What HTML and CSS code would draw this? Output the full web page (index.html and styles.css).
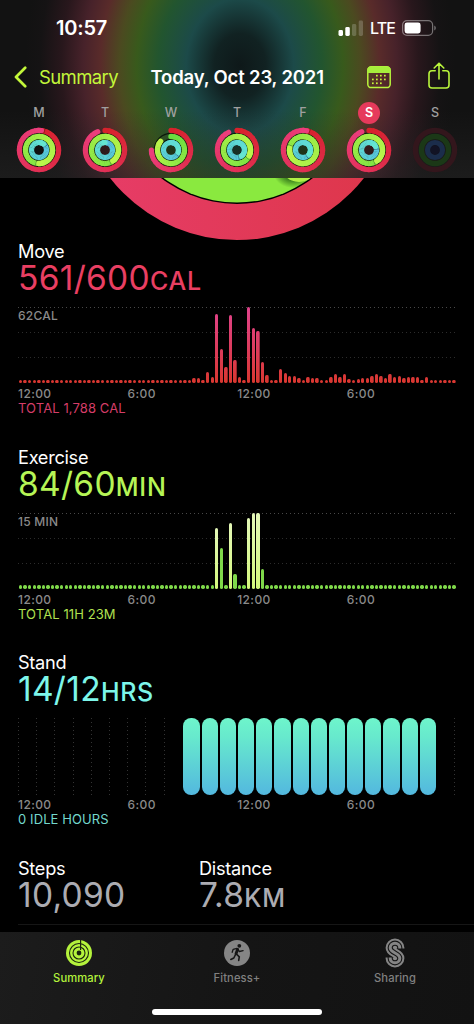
FILE: index.html
```html
<!DOCTYPE html>
<html lang="en">
<head>
  <meta charset="UTF-8">
  <meta name="viewport" content="width=device-width, initial-scale=1.0">
  <title>Activity Summary</title>
  <link rel="stylesheet" href="styles.css">
</head>
<body>
  <header class="header">
    <div class="status">
      <span class="time">10:57</span>
      <div class="status-icons">
        <svg width="26" height="16" viewBox="0 0 26 16">
          <rect x="0.5" y="10" width="4.5" height="6" rx="1.4" fill="#fff"/>
          <rect x="7.3" y="7" width="4.5" height="9" rx="1.4" fill="#fff"/>
          <rect x="14" y="4" width="4.3" height="12" rx="1.4" fill="#fff" opacity=".2"/>
          <rect x="20.7" y="0.5" width="4.3" height="15.5" rx="1.4" fill="#fff" opacity=".2"/>
        </svg>
        <span class="lte">LTE</span>
        <svg width="36" height="16" viewBox="0 0 36 16">
          <rect x="0.6" y="0.6" width="30" height="14.8" rx="4.4" fill="none" stroke="#fff" stroke-opacity=".4" stroke-width="1.2"/>
          <rect x="2.6" y="2.6" width="16" height="10.8" rx="2.4" fill="#fff"/>
          <path d="M32.4 5.5a3 3 0 0 1 0 5z" fill="#fff" opacity=".45"/>
        </svg>
      </div>
    </div>

    <nav class="nav">
      <a class="back">
        <svg width="13" height="22" viewBox="0 0 13 22"><path d="M11.2 1.8 2 11l9.2 9.2" fill="none" stroke="#c3f73a" stroke-width="2.7" stroke-linecap="round" stroke-linejoin="round"/></svg>
        <span class="back-label">Summary</span>
      </a>
      <h1 class="title">Today, Oct 23, 2021</h1>
      <svg class="calendar" width="24" height="23" viewBox="0 0 24 23">
        <rect x="0.8" y="0.8" width="22.4" height="20.8" rx="3.4" fill="none" stroke="#b9f53c" stroke-width="1.5"/>
        <path d="M.4 7V4A3.6 3.6 0 0 1 4 .4h16A3.6 3.6 0 0 1 23.6 4v3z" fill="#a6ee3c"/>
        <g fill="#c3f73a">
          <rect x="9" y="8.8" width="1.7" height="1.7"/><rect x="13" y="8.8" width="1.7" height="1.7"/><rect x="17" y="8.8" width="1.7" height="1.7"/>
          <rect x="5" y="12.6" width="1.7" height="1.7"/><rect x="9" y="12.6" width="1.7" height="1.7"/><rect x="13" y="12.6" width="1.7" height="1.7"/><rect x="17" y="12.6" width="1.7" height="1.7"/>
          <rect x="5" y="16.4" width="1.7" height="1.7"/><rect x="9" y="16.4" width="1.7" height="1.7"/><rect x="13" y="16.4" width="1.7" height="1.7"/>
        </g>
      </svg>
      <svg class="share" width="22" height="28" viewBox="0 0 22 28">
        <path d="M7.2 8.8H4a3 3 0 0 0-3 3V23a3 3 0 0 0 3 3h14a3 3 0 0 0 3-3V11.8a3 3 0 0 0-3-3h-3.200M11 17V1.400M6.200 6 11 1.200 15.800 6" fill="none" stroke="#b9f53c" stroke-width="1.600" stroke-linecap="round" stroke-linejoin="round"/>
      </svg>
    </nav>

    <div class="week" id="week"></div>
  </header>

  <main class="main">
    <svg class="big-ring" width="474" height="62" viewBox="0 178 474 62">
      <defs>
        <radialGradient id="tipShadow">
          <stop offset=".45" stop-color="#1e5a10" stop-opacity=".8"/>
          <stop offset="1" stop-color="#1e5a10" stop-opacity="0"/>
        </radialGradient>
        <linearGradient id="moveRing">
          <stop offset=".1" stop-color="#e63c66"/>
          <stop offset=".9" stop-color="#de374c"/>
        </linearGradient>
        <clipPath id="greenClip"><circle cx="237" cy="80" r="122.500"/></clipPath>
      </defs>
      <circle cx="237" cy="79" r="161" fill="url(#moveRing)"/>
      <circle cx="237" cy="80" r="124" fill="#000"/>
      <circle cx="237" cy="80" r="122.500" fill="#8ae93f"/>
      <g clip-path="url(#greenClip)">
        <ellipse cx="293" cy="172" rx="20" ry="16" fill="url(#tipShadow)"/>
        <circle cx="299" cy="163" r="19" fill="#b0f046"/>
      </g>
    </svg>

    <section class="metric move">
      <h2>Move</h2>
      <p class="value"><span class="num">561/600</span><span class="unit">CAL</span></p>
      <div class="chart lines"><span class="max">62CAL</span><div class="bars" id="moveBars"></div></div>
      <div class="axis"><span>12:00</span><span>6:00</span><span>12:00</span><span>6:00</span></div>
      <p class="total">TOTAL 1,788 CAL</p>
    </section>

    <section class="metric exercise">
      <h2>Exercise</h2>
      <p class="value"><span class="num">84/60</span><span class="unit">MIN</span></p>
      <div class="chart lines"><span class="max">15 MIN</span><div class="bars" id="exerciseBars"></div></div>
      <div class="axis"><span>12:00</span><span>6:00</span><span>12:00</span><span>6:00</span></div>
      <p class="total">TOTAL 11H 23M</p>
    </section>

    <section class="metric stand">
      <h2>Stand</h2>
      <p class="value"><span class="num">14/12</span><span class="unit">HRS</span></p>
      <div class="chart hours" id="standBars"></div>
      <div class="axis"><span>12:00</span><span>6:00</span><span>12:00</span><span>6:00</span></div>
      <p class="total">0 IDLE HOURS</p>
    </section>

    <div class="stats">
      <div class="stat steps">
        <h2>Steps</h2>
        <p class="value"><span class="num">10,090</span></p>
      </div>
      <div class="stat distance">
        <h2>Distance</h2>
        <p class="value"><span class="num">7.8</span><span class="unit">KM</span></p>
      </div>
    </div>
  </main>

  <footer class="tabbar">
    <div class="tabs">
      <a class="tab active">
        <svg width="28" height="30" viewBox="0 0 28 30">
          <circle cx="14" cy="15" r="13" fill="#b4f33c"/>
          <g fill="none" stroke="#1b2410" stroke-width="1.100">
            <circle cx="14" cy="15" r="9.500"/>
            <circle cx="14" cy="15" r="6"/>
          </g>
          <circle cx="14" cy="15" r="2.400" fill="#1b2410"/>
          <path d="M15.600 2v10" stroke="#1b2410" stroke-width="1.200"/>
        </svg>
        <span>Summary</span>
      </a>
      <a class="tab">
        <svg width="28" height="30" viewBox="0 0 28 30">
          <circle cx="14" cy="15" r="13" fill="#858585"/>
          <circle cx="16.300" cy="7.800" r="1.900" fill="#161616"/>
          <path d="M13.400 16l2.900 2.800-.6 3.600M12.300 17l-1.500 3-3 1.500" fill="none" stroke="#161616" stroke-width="1.600" stroke-linecap="round" stroke-linejoin="round"/>
          <path d="M14.600 11.400 13 15.800" stroke="#161616" stroke-width="2.900" stroke-linecap="round"/>
          <path d="M9.200 14.300l1-3 3.800-1 2.400 3.200 3.700-.8" fill="none" stroke="#161616" stroke-width="1.300" stroke-linecap="round" stroke-linejoin="round"/>
        </svg>
        <span>Fitness+</span>
      </a>
      <a class="tab">
        <svg width="28" height="30" viewBox="0 0 28 30" fill="none">
          <path d="M18.800 10.600V9.800a4.800 4.600 0 0 0-9.600 0c0 5.600 9.600 4.800 9.600 10.400a4.800 4.600 0 0 1-9.600 0v-.8" stroke="#858585" stroke-width="9.200"/>
          <path d="M18.800 11V9.800a4.800 4.600 0 0 0-9.600 0c0 5.600 9.600 4.800 9.600 10.400a4.800 4.600 0 0 1-9.600 0V19" stroke="#161616" stroke-width="5.200"/>
          <path d="M18.800 10.600V9.800a4.800 4.600 0 0 0-9.600 0c0 5.600 9.600 4.800 9.600 10.400a4.800 4.600 0 0 1-9.600 0v-.8" stroke="#858585" stroke-width="3"/>
        </svg>
        <span>Sharing</span>
      </a>
    </div>
    <div class="home"></div>
  </footer>

  <script src="script.js"></script>
</body>
</html>
```
FILE: styles.css
```css
* {
  box-sizing: border-box;
}
body {
  margin: 0;
  width: 474px;
  height: 1024px;
  overflow: hidden;
  background: #000;
  color: #fff;
  font-family: Inter, "Liberation Sans", sans-serif;
}
h1, h2, p {
  margin: 0;
  font-weight: 400;
}
svg {
  display: block;
  flex: none;
}

/* Header */
.header {
  height: 178px;
  background:
    linear-gradient(rgba(40, 40, 40, 0) 110px, rgba(40, 40, 40, .45) 178px),
    radial-gradient(ellipse 215px 270px at 240px 66px, #0e1819 0%, #112222 12%, #1c4a49 25%, #22552f 38%, #385a1c 48%, #4b4a20 56%, #592b2a 65%, #47222a 73%, #28171c 83%, #151314 93%, #121212 100%);
}
.status {
  height: 56px;
  padding: 0 36px 0 56px;
  display: flex;
  align-items: center;
  justify-content: space-between;
}
.time {
  font-size: 20px;
  font-weight: 600;
  letter-spacing: -.2px;
}
.status-icons {
  display: flex;
  align-items: center;
  gap: 6px;
}
.lte {
  width: 26px;
  font-size: 16px;
  font-weight: 500;
  letter-spacing: -.9px;
}
.nav {
  height: 42px;
  padding-left: 14px;
  display: flex;
  align-items: center;
}
.back {
  width: 136.5px;
  display: flex;
  align-items: center;
  gap: 12px;
  color: #c3f73a;
  font-size: 18.5px;
}
.back-label {
  letter-spacing: -.6px;
}
.title {
  width: 216.5px;
  font-size: 18.5px;
  font-weight: 600;
  letter-spacing: -.17px;
  white-space: nowrap;
}
.share {
  margin: -3px 0 0 37px;
}
.week {
  padding: 4px 6px 0;
  display: grid;
  grid-template-columns: repeat(7, 66px);
}
.day {
  display: flex;
  flex-direction: column;
  align-items: center;
  gap: 3px;
}
.letter {
  width: 22px;
  height: 22px;
  border-radius: 50%;
  line-height: 22px;
  text-align: center;
  font-size: 12.5px;
  font-weight: 500;
  color: #a0a0a0;
}
.today .letter {
  background: #e63a5c;
  color: #fff;
  font-weight: 600;
}

/* Metrics */
.main {
  height: 754px;
  overflow: hidden;
}
.metric {
  height: 205.67px;
  padding-left: 18px;
}
h2 {
  height: 22px;
  line-height: 22px;
  font-size: 18.2px;
  letter-spacing: -.3px;
}
.value {
  height: 34px;
  line-height: 33px;
  display: flex;
  align-items: baseline;
}
.num {
  font-size: 33.5px;
  letter-spacing: .3px;
}
.unit {
  font-size: 25px;
  font-weight: 500;
  letter-spacing: .7px;
}
.move .value { color: #e93f62; }
.exercise .value { color: #b6f556; }
.stand .value { color: #7df6ea; }
.stats .value { color: #acacb2; }

.chart {
  width: 438px;
  height: 76px;
  margin-top: 11px;
  display: grid;
}
.chart > * {
  grid-area: 1 / 1;
}
.lines {
  background:
    repeating-linear-gradient(90deg, #484848 0 1px, transparent 1px 4px) 0 0 / 100% 1px no-repeat,
    repeating-linear-gradient(90deg, #2c2c2c 0 1px, transparent 1px 4px) 0 25px / 100% 1px no-repeat,
    repeating-linear-gradient(90deg, #2c2c2c 0 1px, transparent 1px 4px) 0 50px / 100% 1px no-repeat;
}
.max {
  line-height: 17px;
  font-size: 12px;
  font-weight: 500;
  letter-spacing: .25px;
  color: #8a8a8a;
}
.bars {
  padding: 0 .3px;
  display: flex;
  align-items: flex-end;
}
.bar {
  flex: 1;
  margin: 0 .6px;
  border-radius: 1.7px;
}
.move .bar {
  background: linear-gradient(#e0438c, #dc3c5c 55%, #d9372f) bottom / 100% 76px;
}
.exercise .bar {
  background: #7fd94a;
}
.exercise .bar.high {
  background: linear-gradient(#e4f8b8, #d4f77c);
}
.chart.hours {
  grid-template-columns: repeat(24, 18.2px);
  height: 77px;
}
.hours .hour {
  grid-area: auto;
  background: repeating-linear-gradient(#333 0 1px, transparent 1px 4px) 0 0 / 1px 100% no-repeat;
}
.hours .hour.last {
  background: repeating-linear-gradient(#333 0 1px, transparent 1px 4px) 100% 0 / 1px 100% no-repeat;
}
.hours .hour.stood {
  margin: 0 .3px 0 1.7px;
  border-radius: 8.1px;
  background: linear-gradient(#6ef5cb, #67e9cd 25%, #53b8df);
}
.axis {
  width: 438px;
  height: 15px;
  margin-top: 3px;
  line-height: 15px;
  display: grid;
  grid-template-columns: repeat(4, 109.6px);
  font-size: 12px;
  font-weight: 500;
  letter-spacing: .4px;
  color: #8a8a8a;
}
.stand .axis {
  margin-top: 2px;
}
.total {
  line-height: 15px;
  font-size: 13px;
  letter-spacing: .1px;
}
.move .total { color: #d53d68; }
.exercise .total { color: #b0e050; }
.stand .total { color: #74d8cd; }

.stats {
  height: 68px;
  margin-left: 18px;
  display: grid;
  grid-template-columns: 181px 1fr;
  border-bottom: 1px solid #161616;
}

/* Tab bar */
.tabbar {
  height: 92px;
  padding-top: 6px;
  background: linear-gradient(100deg, #1c1c1c, #151515 50%, #121212);
}
.tabs {
  height: 71px;
  display: grid;
  grid-template-columns: repeat(3, 158px);
}
.tab {
  display: flex;
  flex-direction: column;
  align-items: center;
  gap: 2px;
  color: #808080;
  font-size: 11.2px;
  font-weight: 500;
  letter-spacing: .1px;
  line-height: 16px;
}
.tab.active {
  color: #b4f33c;
}
.home {
  width: 170px;
  height: 6px;
  margin: 0 auto;
  border-radius: 3px;
  background: #fff;
}
```
FILE: script.js
```js
// Quarter-hour values, in px of the 76px chart
const MIN = 3.4;
const move = new Array(96).fill(MIN);
[5, 5, MIN, 11, 6.5, 69.5, 34, 16, 68, 23, 6.5, MIN, 76, 55, 52, 21.5, 8, MIN, MIN,
 14.5, 10, 7.5, 7, 5.5, MIN, 6, 5, 5.5, MIN, MIN, 6, 9, 6.5, 9, 4, MIN, 3.6, 5.5, 5.5, 7,
 9, 7, 5.5, 9, 6, 7, 5, 6, 6, 6.5, MIN, 6.5].forEach((v, i) => { move[38 + i] = v; });

const exercise = new Array(96).fill(MIN);
Object.assign(exercise, { 43: 61, 44: 40.5, 46: 66, 47: 15, 50: 71, 51: 76, 52: 76, 53: 20 });

function drawBars(id, data) {
  document.getElementById(id).innerHTML = data.map(v =>
    `<div class="bar${v > 50 ? ' high' : ''}" style="height:${v}px"></div>`).join('');
}
drawBars('moveBars', move);
drawBars('exerciseBars', exercise);

let hours = '';
for (let h = 0; h < 24; h++) {
  hours += `<div class="hour${h > 8 && h < 23 ? ' stood' : ''}${h === 23 ? ' last' : ''}"></div>`;
}
document.getElementById('standBars').innerHTML = hours;

// Week rings: fraction of goal for move, exercise, stand
const days = [
  ['M', 1.02, 1.5, 1.1],
  ['T', 0.94, 1.4, 1],
  ['W', 0.75, 0.86, 1.3],
  ['T', 0.93, 1.32, 1.4],
  ['F', 1.03, 1.77, 1.35],
  ['S', 0.94, 1.4, 1.17],
  ['S', 0, 0, 0]
];
const rings = [
  { r: 19.6, w: 5.2, from: [215, 34, 44], to: [236, 62, 126], track: '#33161c' },
  { r: 13.5, w: 5.4, from: [104, 222, 64], to: [190, 245, 75], track: '#1b3817' },
  { r: 7.5, w: 5.2, from: [82, 190, 226], to: [100, 230, 208], track: '#1b2d4b' }
];

function point(r, t) {
  const a = t * 2 * Math.PI;
  return `${(23 + r * Math.sin(a)).toFixed(2)} ${(23 - r * Math.cos(a)).toFixed(2)}`;
}

function ringSvg(ring, frac) {
  if (!frac) {
    return `<circle cx="23" cy="23" r="${ring.r}" fill="none" stroke="${ring.track}" stroke-width="${ring.w}"/>`;
  }
  let out = '';
  const steps = Math.round(frac * 36);
  for (let i = 0; i < steps; i++) {
    const a = i / steps * frac;
    const b = (i + 1) / steps * frac;
    const c = ring.from.map((v, k) => Math.round(v + (ring.to[k] - v) * i / steps));
    const last = i === steps - 1;
    // dark edge under the tip when the ring passes its own start
    if (last && frac > 1) {
      const edge = b + 3 / (2 * Math.PI * ring.r);
      out += `<path d="M${point(ring.r - ring.w / 2, edge)}L${point(ring.r + ring.w / 2, edge)}" stroke="#000" stroke-opacity=".3" stroke-width="1"/>`;
    }
    out += `<path d="M${point(ring.r, a)}A${ring.r} ${ring.r} 0 0 1 ${point(ring.r, last ? b : b + .006)}" fill="none" stroke="rgb(${c})" stroke-width="${ring.w}"${last || i === 0 ? ' stroke-linecap="round"' : ''}/>`;
  }
  return out;
}

document.getElementById('week').innerHTML = days.map(([name, ...fracs], i) => `
  <div class="day${i === 5 ? ' today' : ''}">
    <span class="letter">${name}</span>
    <svg width="46" height="46" viewBox="0 0 46 46">
      ${fracs[0] ? '<g fill="none" stroke="#071007" stroke-opacity=".85" stroke-width="1.4"><circle cx="23" cy="23" r="16.6"/><circle cx="23" cy="23" r="10.500"/></g><circle cx="23" cy="23" r="5" fill="#000" opacity=".3"/>' : '<circle cx="23" cy="23" r="5" fill="#121324"/>'}
      ${rings.map((ring, k) => ringSvg(ring, fracs[k])).join('')}
    </svg>
  </div>`).join('');
```
